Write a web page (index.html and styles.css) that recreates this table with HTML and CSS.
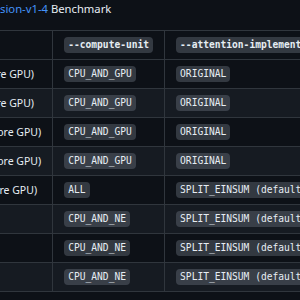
FILE: index.html
```html
<!DOCTYPE html>
<html lang="en">
<head>
    <meta charset="UTF-8">
    <meta name="viewport" content="width=device-width, initial-scale=1.0">
    <title>stable-diffusion-v1-4 Benchmark</title>
    <link rel="stylesheet" href="styles.css">
</head>
<body>
    <div class="page">
        <h3 class="bench-title">
            <a href="#" class="bench-link">stable-diffusion-v1-4</a> Benchmark
        </h3>

        <table class="bench-table">
            <thead>
                <tr>
                    <th>Device</th>
                    <th><code>--compute-unit</code></th>
                    <th><code>--attention-implementation</code></th>
                    <th>Latency (seconds)</th>
                </tr>
            </thead>
            <tbody>
                <tr>
                    <td>Mac Studio (M1 Ultra, 64-core GPU)</td>
                    <td><code>CPU_AND_GPU</code></td>
                    <td><code>ORIGINAL</code></td>
                    <td>9</td>
                </tr>
                <tr>
                    <td>Mac Studio (M1 Ultra, 48-core GPU)</td>
                    <td><code>CPU_AND_GPU</code></td>
                    <td><code>ORIGINAL</code></td>
                    <td>13</td>
                </tr>
                <tr>
                    <td>MacBook Pro (M1 Max, 32-core GPU)</td>
                    <td><code>CPU_AND_GPU</code></td>
                    <td><code>ORIGINAL</code></td>
                    <td>18</td>
                </tr>
                <tr>
                    <td>MacBook Pro (M1 Max, 24-core GPU)</td>
                    <td><code>CPU_AND_GPU</code></td>
                    <td><code>ORIGINAL</code></td>
                    <td>20</td>
                </tr>
                <tr>
                    <td>MacBook Pro (M1 Pro, 16-core GPU)</td>
                    <td><code>ALL</code></td>
                    <td><code>SPLIT_EINSUM (default)</code></td>
                    <td>26</td>
                </tr>
                <tr>
                    <td>MacBook Pro (M2)</td>
                    <td><code>CPU_AND_NE</code></td>
                    <td><code>SPLIT_EINSUM (default)</code></td>
                    <td>23</td>
                </tr>
                <tr>
                    <td>MacBook Pro (M1)</td>
                    <td><code>CPU_AND_NE</code></td>
                    <td><code>SPLIT_EINSUM (default)</code></td>
                    <td>35</td>
                </tr>
                <tr>
                    <td>iPad Pro (M1)</td>
                    <td><code>CPU_AND_NE</code></td>
                    <td><code>SPLIT_EINSUM (default)</code></td>
                    <td>38</td>
                </tr>
            </tbody>
        </table>
    </div>
</body>
</html>
```

FILE: styles.css
```css
* {
    margin: 0;
    padding: 0;
    box-sizing: border-box;
}

body {
    font-family: 'Noto Sans', 'Liberation Sans', sans-serif;
    background: #0d1117;
    color: #e6edf3;
    overflow: hidden;
}

/* the page is scrolled sideways: the left part of the content is out of view */
.page {
    display: flex;
    flex-direction: column;
    align-items: flex-start;
    gap: 14px;
    padding-top: 2px;
    white-space: nowrap;
}

.bench-title {
    font-size: 11.25px;
    font-weight: 400;
    line-height: 14px;
    margin-left: -60px;
}

.bench-link {
    color: #4493f8;
    text-decoration: none;
}

.bench-table {
    border-collapse: collapse;
    border-spacing: 0;
    margin-left: -151px;
    font-size: 10.5px;
}

.bench-table tr {
    background: #0d1117;
    border-top: 1px solid #30363d;
}

.bench-table tbody tr:nth-child(2n) {
    background: #161b22;
}

.bench-table th,
.bench-table td {
    border: 1px solid #30363d;
    padding: 6px 11px;
    height: 29px;
    line-height: 16px;
    vertical-align: middle;
}

.bench-table th {
    font-weight: 600;
    text-align: center;
}

.bench-table td {
    text-align: left;
}

code {
    display: inline-block;
    vertical-align: top;
    font-family: 'DejaVu Sans Mono', 'Liberation Mono', monospace;
    font-size: 9.6px;
    line-height: 12px;
    padding: 2px 4px;
    border-radius: 4px;
    background: rgba(110, 118, 129, 0.4);
    color: #e6edf3;
}

th code {
    font-weight: 700;
}
```
